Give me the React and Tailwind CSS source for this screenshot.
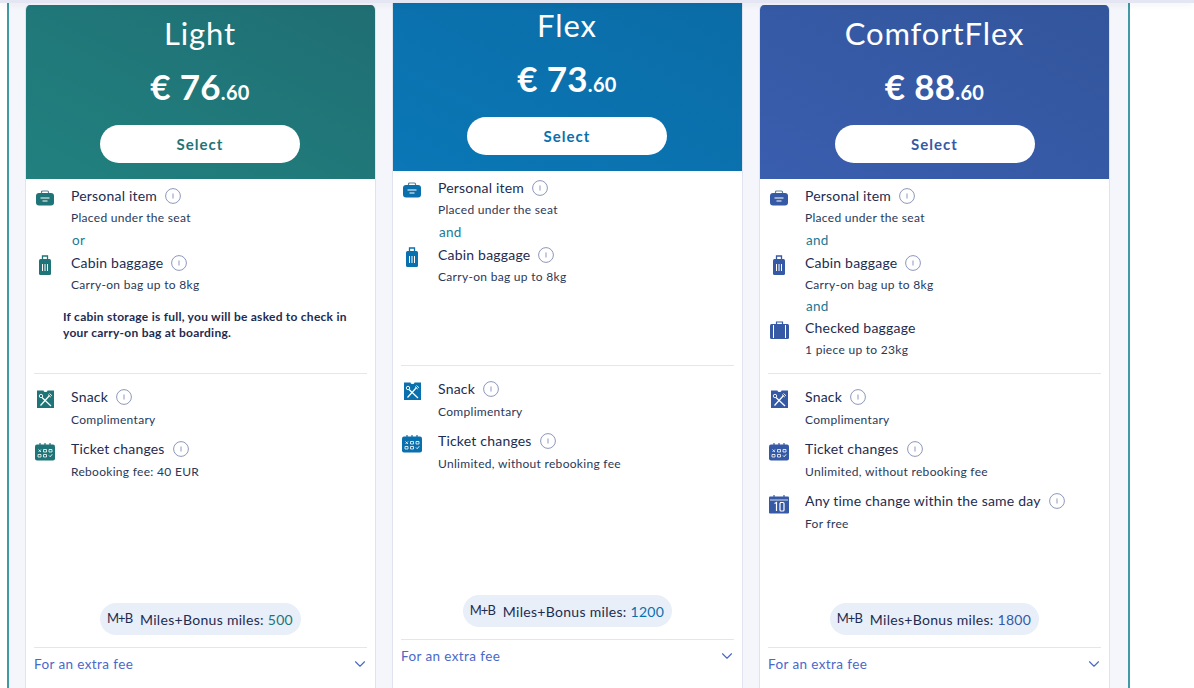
import { ChevronDown } from 'lucide-react';

const font = { fontFamily: 'Lato, "Noto Sans", sans-serif' };

// --- Icons ---
const PersonalIcon = ({ color }) => (
  <svg width="18" height="16" viewBox="0 0 18 16" fill="none">
    <path d="M5.5 3.5V2a1 1 0 0 1 1-1h5a1 1 0 0 1 1 1v1.5" stroke="#5d7f9a" strokeWidth="1.2" />
    <rect x="0" y="3" width="18" height="12.5" rx="3" fill={color} />
    <path d="M4.5 8h9M6.5 11h5" stroke="#fff" strokeWidth="1.2" />
  </svg>
);

const CabinIcon = ({ color }) => (
  <svg width="14" height="21" viewBox="0 0 14 21" fill="none">
    <path d="M4.5 4V1h5v3" stroke={color} strokeWidth="1.3" />
    <rect x="1" y="4" width="12" height="16" rx="1.5" fill={color} />
    <path d="M4.5 9v7M7 9v7M9.5 9v7" stroke="#fff" strokeWidth="1" />
  </svg>
);

const CheckedIcon = ({ color }) => (
  <svg width="19" height="18" viewBox="0 0 19 18" fill="none">
    <path d="M6.5 3V1h6v2" stroke={color} strokeWidth="1.2" />
    <rect x="0" y="3" width="19" height="15" rx="1.5" fill={color} />
    <path d="M3.5 4v13M15.5 4v13" stroke="#fff" strokeWidth="1" />
  </svg>
);

const SnackIcon = ({ color }) => (
  <svg width="17" height="18" viewBox="0 0 17 18" fill="none">
    <path d="M0 0.5h6.5a2 1.5 0 0 0 4 0H17V18H0z" fill={color} />
    <path d="M5 7.5l9 8.5M12.5 5.5L3.5 15.5" stroke="#fff" strokeWidth="1.2" />
    <circle cx="4" cy="6" r="1.7" stroke="#fff" strokeWidth="0.9" />
    <path d="M11 4.5l2.8 2.6M12.5 3.5l2.5 2.3" stroke="#fff" strokeWidth="0.9" />
  </svg>
);

const TicketIcon = ({ color }) => (
  <svg width="20" height="18" viewBox="0 0 20 18" fill="none">
    <path d="M5 0v3M10 0v3M15 0v3" stroke={color} strokeWidth="1.2" />
    <rect x="0" y="1.5" width="20" height="16" rx="2" fill={color} />
    <path d="M3.5 6.5l2.5 2.5M6 6.5L3.5 9M8.5 6.5h3v2.5h-3zM14 6.5h3v2.5h-3zM3 11.5h3V14H3zM8.5 11.5h3V14h-3z" stroke="#fff" strokeWidth="0.8" />
    <path d="M14 12.5l1.2 1.2 2-2.4" stroke="#fff" strokeWidth="0.9" />
  </svg>
);

const SameDayIcon = ({ color }) => (
  <svg width="20" height="19" viewBox="0 0 20 19" fill="none">
    <path d="M5 0v3M15 0v3" stroke={color} strokeWidth="1.2" />
    <rect x="0" y="1.5" width="20" height="17" rx="1" fill={color} />
    <path d="M1 5h18" stroke="#fff" strokeWidth="0.8" />
    <path d="M5.5 8.5l2-1v8.5M11 7.5h3a1 1 0 0 1 1 1v6.5a1 1 0 0 1-1 1h-2a1 1 0 0 1-1-1V8.5a1 1 0 0 1 1-1z" stroke="#fff" strokeWidth="1.2" />
  </svg>
);

const InfoIcon = () => (
  <svg width="16" height="16" viewBox="0 0 16 16" fill="none" className="shrink-0">
    <circle cx="8" cy="8" r="7.4" stroke="#8d97bb" strokeWidth="1" />
    <path d="M8 5.5v5" stroke="#8d97bb" strokeWidth="1" />
  </svg>
);

const Row = ({ icon, title, sub, info = true, iconClass = '', subClass = 'h-[22px]' }) => (
  <div className="flex">
    <div className="w-[37px] shrink-0">
      <div className={`w-[22px] flex justify-center ${iconClass}`}>{icon}</div>
    </div>
    <div className="min-w-0">
      <div className="h-[22px] flex items-center gap-[8px] text-[14px] tracking-[0.2px] text-[#1d2c50]">
        <span className="-mt-[1px]">{title}</span>
        {info && <InfoIcon />}
      </div>
      <div className={`flex items-center text-[12px] tracking-[0.3px] text-[#2a3858] ${subClass}`}>{sub}</div>
    </div>
  </div>
);

const Connector = ({ text, className = 'h-[22px]' }) => (
  <div className={`pl-[38px] flex items-center text-[13.5px] tracking-[0.3px] text-[#1b7a96] ${className}`}>{text}</div>
);

const Card = ({ name, whole, cents, color, miles, extras, note, word, checked, ticket, sameDay, light, flex }) => (
  <div className={`w-[351px] h-[720px] shrink-0 bg-white flex flex-col border-x border-[#dfe3ee] ${flex ? '' : 'mt-[2px] rounded-t-[5px] overflow-hidden'}`}>
    <div className={`flex flex-col items-center text-white ${flex ? 'h-[168px] pt-[4px] pr-[1px]' : 'h-[174px] pt-[10px]'} ${light ? 'pr-[1px] bg-linear-to-tr from-[#21817f] to-[#1f6e73]' : flex ? 'bg-linear-to-tr from-[#0a77b6] to-[#0b6ca6]' : 'bg-linear-to-tr from-[#3a5eae] to-[#32559c]'}`}>
      <div className="h-[36px] leading-[36px] text-[31px] tracking-[0.9px]">{name}</div>
      <div className="mt-[16px] h-[38px] leading-[38px] font-bold tracking-[0.3px]">
        <span className="text-[35px]">€ {whole}</span>
        <span className="text-[20px]">.{cents}</span>
      </div>
      <button className="mt-[20px] w-[200px] h-[38px] rounded-full bg-white text-[15px] font-bold tracking-[1px]" style={{ color }}>Select</button>
    </div>
    <div className="flex-1 px-2 flex flex-col">
      <div className="h-[195px] pt-[6px] border-b border-[#e3e6ec]">
        <Row icon={<PersonalIcon color={color} />} iconClass="pt-[5px]" title="Personal item" sub="Placed under the seat" />
        <Connector text={word} className="h-[23px]" />
        <Row icon={<CabinIcon color={color} />} iconClass="pt-[3px]" title="Cabin baggage" sub="Carry-on bag up to 8kg" />
        {checked && (
          <>
            <Connector text="and" className="h-[21px]" />
            <Row icon={<CheckedIcon color={color} />} iconClass="pt-[4px]" title="Checked baggage" sub="1 piece up to 23kg" info={false} />
          </>
        )}
        {note && (
          <p className="mt-[13px] pl-[29px] text-[12px] leading-[16px] font-bold text-[#1d2c50] tracking-[0.25px]">
            If cabin storage is full, you will be asked to check in<br />your carry-on bag at boarding.
          </p>
        )}
      </div>
      <div className="h-[229px] pt-[12px] flex flex-col gap-[7px]">
        <Row icon={<SnackIcon color={color} />} iconClass="pt-[4px]" subClass="h-[23px]" title="Snack" sub="Complimentary" />
        <Row icon={<TicketIcon color={color} />} iconClass="pt-[5px]" subClass="h-[23px]" title="Ticket changes" sub={ticket} />
        {sameDay && <Row icon={<SameDayIcon color={color} />} iconClass="pt-[5px]" subClass="h-[23px]" title="Any time change within the same day" sub="For free" />}
      </div>
      <div className="flex justify-center">
        <div className="h-[32px] pl-[7px] pr-[8px] rounded-full bg-[#e8eff9] flex items-center gap-[9px] text-[14px] tracking-[0.3px] text-[#1d2c50]">
          <span className="w-[24px] text-[13px] tracking-[-1px]">M+B</span>
          <span>Miles+Bonus miles: <span style={{ color }}>{miles}</span></span>
        </div>
      </div>
      <div className="mt-[12px] h-[33px] border-t border-[#e3e6ec] flex items-center justify-between text-[13.5px] text-[#4a68c9] tracking-[0.4px]">
        <span>{extras}</span>
        <ChevronDown size={18} strokeWidth={1.5} className="mr-[-2px]" />
      </div>
    </div>
  </div>
);

const fares = [
  { name: 'Light', whole: '76', cents: '60', color: '#1f7478', miles: '500', word: 'or', note: true, ticket: 'Rebooking fee: 40 EUR', light: true },
  { name: 'Flex', whole: '73', cents: '60', color: '#0a70ad', miles: '1200', word: 'and', ticket: 'Unlimited, without rebooking fee', flex: true },
  { name: 'ComfortFlex', whole: '88', cents: '60', color: '#3659a6', miles: '1800', word: 'and', checked: true, sameDay: true, ticket: 'Unlimited, without rebooking fee' },
];

export default function App() {
  return (
    <div className="h-[688px] overflow-hidden bg-white flex flex-col" style={font}>
      <div className="h-[3px] shrink-0 bg-[#e4e7f3] shadow-[0_2px_6px_rgba(0,0,0,0.08)] relative z-10" />
      <div className="flex-1 min-h-0 flex items-stretch">
        <div className="ml-[7px] w-[1123px] shrink-0 bg-[#f4f6fc] border-x-2 border-[#3f9aa3] pl-[16px] flex items-start gap-[16px] overflow-hidden">
          {fares.map(f => <Card key={f.name} extras="For an extra fee" {...f} />)}
        </div>
      </div>
    </div>
  );
}
